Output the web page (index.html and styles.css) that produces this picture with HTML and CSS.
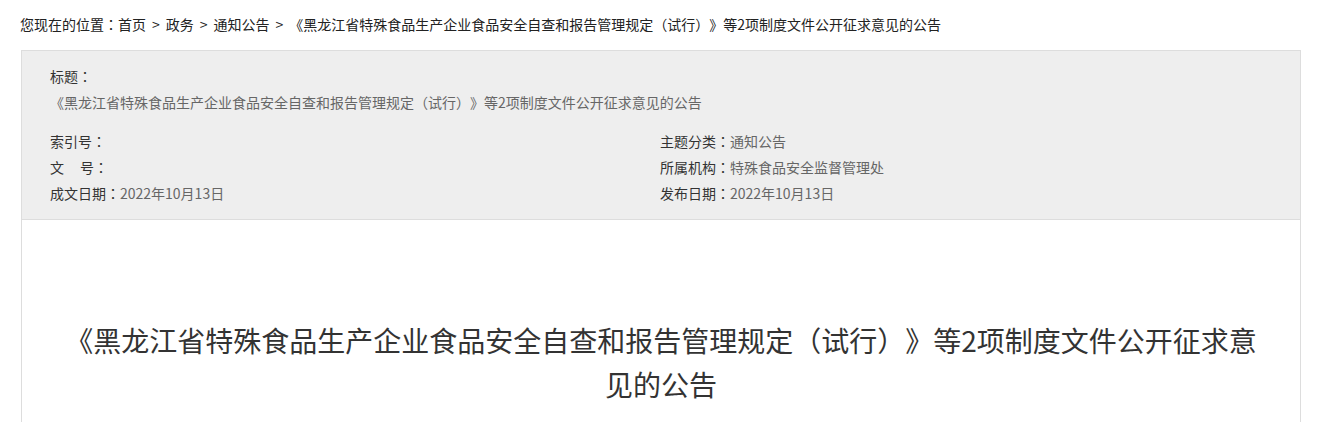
FILE: index.html
```html
<!DOCTYPE html>
<html lang="zh-CN">
<head>
<meta charset="utf-8">
<title>公告</title>
<link rel="stylesheet" href="styles.css">
</head>
<body>
<div class="page">
  <div class="crumb">您现在的位置<span class="p" lang="zh-TW">：</span><a>首页</a><span class="sep">&gt;</span><a>政务</a><span class="sep">&gt;</span><a>通知公告</a><span class="sep">&gt;</span><span class="cur">《黑龙江省特殊食品生产企业食品安全自查和报告管理规定<span class="p" lang="zh-TW">（试行）</span>》等2项制度文件公开征求意见的公告</span></div>
  <div class="article">
    <div class="info">
      <div class="row">标题<span class="p" lang="zh-TW">：</span></div>
      <div class="row val">《黑龙江省特殊食品生产企业食品安全自查和报告管理规定<span class="p" lang="zh-TW">（试行）</span>》等2项制度文件公开征求意见的公告</div>
      <div class="meta">
        <div class="col">
          <div class="row">索引号<span class="p" lang="zh-TW">：</span></div>
          <div class="row">文<span class="gap"></span>号<span class="p" lang="zh-TW">：</span></div>
          <div class="row">成文日期<span class="p" lang="zh-TW">：</span><span class="val">2022年10月13日</span></div>
        </div>
        <div class="col">
          <div class="row">主题分类<span class="p" lang="zh-TW">：</span><span class="val">通知公告</span></div>
          <div class="row">所属机构<span class="p" lang="zh-TW">：</span><span class="val">特殊食品安全监督管理处</span></div>
          <div class="row">发布日期<span class="p" lang="zh-TW">：</span><span class="val">2022年10月13日</span></div>
        </div>
      </div>
    </div>
    <div class="body">
      <h1 class="title">《黑龙江省特殊食品生产企业食品安全自查和报告管理规定<span class="p" lang="zh-TW">（试行）</span>》等2项制度文件公开征求意见的公告</h1>
    </div>
  </div>
</div>
</body>
</html>
```

FILE: styles.css
```css
html, body {
  margin: 0;
  padding: 0;
  background: #fff;
}
body {
  font-family: "Noto Sans CJK SC", "Microsoft YaHei", "Liberation Sans", sans-serif;
  font-size: 14px;
  color: #333;
  text-spacing-trim: space-all;
}
.p {
  font-family: "Noto Sans CJK TC", "Noto Sans CJK SC", sans-serif;
}
.page {
  margin: 0 23px 0 21px;
}
.crumb {
  padding: 12px 0 14px;
  line-height: 24px;
  color: #222;
  margin-left: -1px;
  white-space: nowrap;
}
.crumb a {
  color: #222;
  text-decoration: none;
}
.sep {
  margin: 0 6px;
}
.article {
  border: 1px solid #ddd;
  border-bottom: none;
}
.info {
  background: #eee;
  border-bottom: 1px solid #ddd;
  padding: 12px 30px 13px 28px;
}
.row {
  line-height: 26px;
  color: #333;
}
.val {
  color: #666;
}
.meta {
  display: grid;
  grid-template-columns: 1fr 1fr;
  margin-top: 13px;
}
.gap {
  display: inline-block;
  width: 16px;
}
.body {
  padding: 98px 35px 40px;
}
.title {
  margin: 0;
  font-size: 28px;
  font-weight: normal;
  line-height: 44px;
  text-align: center;
  color: #333;
}
```
